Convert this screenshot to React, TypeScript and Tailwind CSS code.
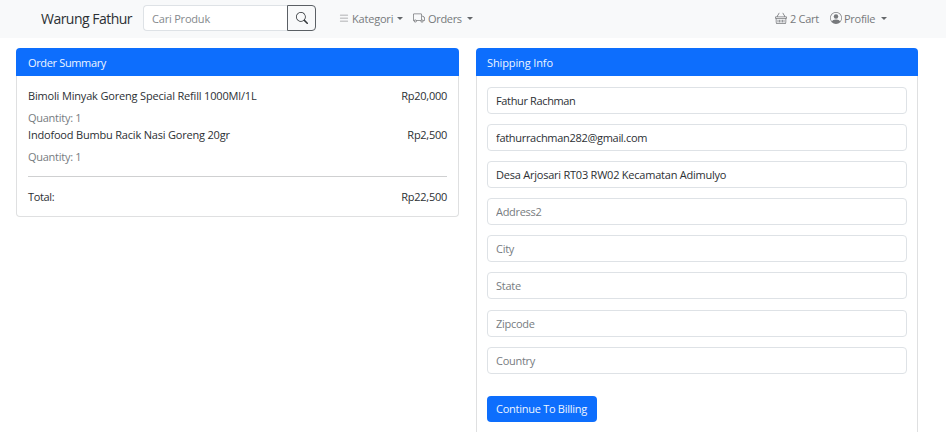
import { BsBasket, BsList, BsPersonCircle, BsSearch, BsTruck } from "react-icons/bs";

const items = [
  { name: "Bimoli Minyak Goreng Special Refill 1000Ml/1L", price: "Rp20,000", spacing: "tracking-[-0.17px]" },
  { name: "Indofood Bumbu Racik Nasi Goreng 20gr", price: "Rp2,500", spacing: "tracking-[-0.19px]" },
];

const fields = [
  { label: "Name", value: "Fathur Rachman", spacing: "tracking-[-0.36px]" },
  { label: "Email", value: "fathurrachman282@gmail.com", spacing: "tracking-[-0.3px]" },
  { label: "Address", value: "Desa Arjosari RT03 RW02 Kecamatan Adimulyo", spacing: "tracking-[-0.23px]" },
  { label: "Address2", value: "", spacing: "tracking-[-0.3px]" },
  { label: "City", value: "", spacing: "tracking-[-0.27px]" },
  { label: "State", value: "", spacing: "tracking-[-0.27px]" },
  { label: "Zipcode", value: "", spacing: "tracking-[-0.27px]" },
  { label: "Country", value: "", spacing: "tracking-[-0.27px]" },
];

function Caret({ className }: { className: string }) {
  return (
    <span
      className={`border-x-[3.4px] border-t-[3.4px] border-x-transparent border-t-[#65686b] ${className}`}
    />
  );
}

function CardHeader({ title, className }: { title: string; className: string }) {
  return (
    <div className={`flex h-7 items-center rounded-t-[4px] bg-[#0d6efd] text-[#eef5ff] ${className}`}>{title}</div>
  );
}

export default function App() {
  return (
    <div className="h-[432px] w-[946px] overflow-hidden bg-white font-['Open_Sans','Noto_Sans',sans-serif] text-[11px] leading-[17px] tracking-[-0.27px] text-[#2c3034]">
      <nav className="flex h-[38px] items-center bg-[#f8f9fa] pr-[59px] pb-[2px] pl-[41px] text-[#77797c]">
        <a className="w-[102px] text-[14px] tracking-[-0.52px] whitespace-nowrap text-[#2c3034]">Warung Fathur</a>
        <form className="flex h-[26px] w-[173px]">
          <input
            placeholder="Cari Produk"
            className="w-[144px] rounded-l-[4px] border border-r-0 border-[#dee2e6] bg-white px-2 tracking-[-0.2px] placeholder:text-[#85898d]"
          />
          <button
            type="button"
            aria-label="Search"
            className="flex w-[29px] items-center justify-center rounded-r-[4px] border border-[#5b6065] text-[#33373b]"
          >
            <BsSearch size={12} />
          </button>
        </form>
        <a className="ml-[22px] flex items-center whitespace-nowrap">
          <BsList size={12} className="mr-[2px] text-[#97999b]" />
          <span className="w-[43px] tracking-[-0.2px]">Kategori</span>
          <Caret className="ml-[2px]" />
        </a>
        <a className="ml-[10px] flex items-center whitespace-nowrap">
          <BsTruck size={12} className="mr-[3px]" />
          <span className="w-[34px] tracking-[-0.32px]">Orders</span>
          <Caret className="ml-[5px]" />
        </a>
        <a className="ml-auto flex items-center whitespace-nowrap">
          <BsBasket size={12} className="mr-[3px]" />
          <span className="w-[30px]">2 Cart</span>
        </a>
        <a className="ml-[10px] flex items-center whitespace-nowrap">
          <BsPersonCircle size={12} className="mr-[2px]" />
          <span className="w-[32px]">Profile</span>
          <Caret className="ml-[5px]" />
        </a>
      </nav>

      <main className="flex items-start gap-[17px] pt-[10px] pl-4">
        <section className="w-[443px]">
          <CardHeader title="Order Summary" className="pl-3 tracking-[-0.35px]" />
          <div className="h-[141px] rounded-b-[4px] border border-t-0 border-[#dfe0e1] px-[11px] pt-[11px]">
            {items.map((item) => (
              <div key={item.name} className="h-[38.5px]">
                <div className="flex justify-between">
                  <span className={item.spacing}>{item.name}</span>
                  <span>{item.price}</span>
                </div>
                <p className="mt-[5px] text-[#777c81]">Quantity: 1</p>
              </div>
            ))}
            <hr className="mt-[12px] border-[#cfd0d1]" />
            <div className="mt-[11px] flex justify-between">
              <span className="tracking-[-0.35px]">Total:</span>
              <span>Rp22,500</span>
            </div>
          </div>
        </section>

        <section className="w-[442px]">
          <CardHeader title="Shipping Info" className="pl-[11px] tracking-[-0.12px]" />
          <form className="h-[370px] border border-t-0 border-[#dfe0e1] px-[10px] pt-[11px]">
            <div className="flex flex-col gap-[10.1px]">
              {fields.map((field) => (
                <input
                  key={field.label}
                  placeholder={field.label}
                  defaultValue={field.value}
                  className={`h-[27px] w-full rounded-[4px] border border-[#dee2e6] bg-white px-2 placeholder:text-[#777c81] ${field.spacing}`}
                />
              ))}
            </div>
            <button
              type="button"
              className="mt-[22px] h-[26px] w-[110px] rounded-[4px] bg-[#0d6efd] pr-px whitespace-nowrap text-[#eef5ff]"
            >
              Continue To Billing
            </button>
          </form>
        </section>
      </main>
    </div>
  );
}
